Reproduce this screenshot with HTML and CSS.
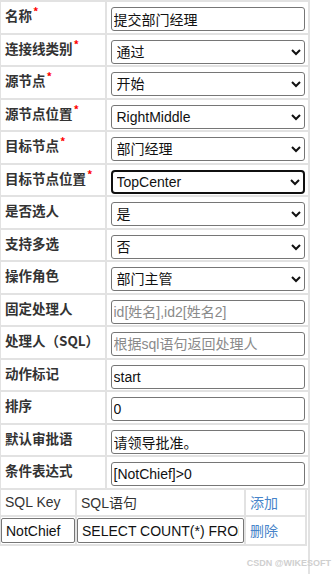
FILE: index.html
```html
<!DOCTYPE html>
<html lang="zh-CN">
<head>
    <meta charset="UTF-8">
    <meta name="viewport" content="width=device-width, initial-scale=1.0">
    <title>连线属性</title>
    <link rel="stylesheet" href="styles.css">
</head>
<body>
    <main class="panel">
        <table class="form">
            <tr>
                <td class="lbl">名称<span class="req">*</span></td>
                <td class="fld"><input class="inp" type="text" value="提交部门经理"></td>
            </tr>
            <tr>
                <td class="lbl">连接线类别<span class="req">*</span></td>
                <td class="fld"><select class="sel"><option>通过</option><option>退回</option></select></td>
            </tr>
            <tr>
                <td class="lbl">源节点<span class="req">*</span></td>
                <td class="fld"><select class="sel"><option>开始</option></select></td>
            </tr>
            <tr>
                <td class="lbl">源节点位置<span class="req">*</span></td>
                <td class="fld"><select class="sel"><option>RightMiddle</option></select></td>
            </tr>
            <tr>
                <td class="lbl">目标节点<span class="req">*</span></td>
                <td class="fld"><select class="sel"><option>部门经理</option></select></td>
            </tr>
            <tr>
                <td class="lbl">目标节点位置<span class="req">*</span></td>
                <td class="fld"><select class="sel sel-focus"><option>TopCenter</option></select></td>
            </tr>
            <tr>
                <td class="lbl">是否选人</td>
                <td class="fld"><select class="sel"><option>是</option><option>否</option></select></td>
            </tr>
            <tr>
                <td class="lbl">支持多选</td>
                <td class="fld"><select class="sel"><option>否</option><option>是</option></select></td>
            </tr>
            <tr>
                <td class="lbl">操作角色</td>
                <td class="fld"><select class="sel"><option>部门主管</option></select></td>
            </tr>
            <tr>
                <td class="lbl">固定处理人</td>
                <td class="fld"><input class="inp" type="text" placeholder="id[姓名],id2[姓名2]"></td>
            </tr>
            <tr>
                <td class="lbl">处理人（SQL）</td>
                <td class="fld"><input class="inp" type="text" placeholder="根据sql语句返回处理人"></td>
            </tr>
            <tr>
                <td class="lbl">动作标记</td>
                <td class="fld"><input class="inp" type="text" value="start"></td>
            </tr>
            <tr>
                <td class="lbl">排序</td>
                <td class="fld"><input class="inp" type="text" value="0"></td>
            </tr>
            <tr>
                <td class="lbl">默认审批语</td>
                <td class="fld"><input class="inp" type="text" value="请领导批准。"></td>
            </tr>
            <tr>
                <td class="lbl">条件表达式</td>
                <td class="fld"><input class="inp" type="text" value="[NotChief]>0"></td>
            </tr>
        </table>

        <table class="sql">
            <tr class="sql-head">
                <td class="c-key">SQL Key</td>
                <td class="c-stmt">SQL语句</td>
                <td class="c-op"><a href="#" class="op-link">添加</a></td>
            </tr>
            <tr class="sql-row">
                <td class="c-key"><input class="cell-inp" type="text" value="NotChief"></td>
                <td class="c-stmt"><input class="cell-inp" type="text" value="SELECT COUNT(*) FROM Users WHERE IsChief=1"></td>
                <td class="c-op"><a href="#" class="op-link">删除</a></td>
            </tr>
        </table>
    </main>
    <div class="watermark">CSDN @WIKESOFT</div>
</body>
</html>
```

FILE: styles.css
```css
:root {
    --line-color: #e2e2e2;
    --field-border: #767676;
    --label-color: #333333;
    --link-color: #4683c9;
}

body {
    margin: 0;
    background: #ffffff;
    font-family: "Liberation Sans", "Noto Sans CJK SC", sans-serif;
    color: var(--label-color);
}

.panel {
    width: 308px;
    min-height: 574px;
    border-right: 2px solid var(--line-color);
}

/* main form */
.form {
    width: 100%;
    border-collapse: separate;
    border-spacing: 0;
    table-layout: fixed;
    border-top: 2px solid var(--line-color);
    border-left: 1px solid var(--line-color);
}

.form td {
    border-bottom: 2px solid var(--line-color);
}

.lbl {
    width: 100px;
    padding: 4px 0 0 4px;
    border-right: 2px solid var(--line-color);
    vertical-align: top;
    font-family: "Noto Sans CJK SC", sans-serif;
    font-size: 13.5px;
    line-height: 18px;
    font-weight: 700;
    white-space: nowrap;
}

.req {
    color: #ff0000;
    font-size: 11px;
    line-height: 11px;
    vertical-align: top;
    margin-left: 1px;
}

.fld {
    padding: 5px 3px 1.5px 3.5px;
}

.inp,
.sel {
    display: block;
    width: 100%;
    height: 24px;
    box-sizing: border-box;
    margin: 0;
    border: 1px solid var(--field-border);
    border-radius: 3px;
    background: #ffffff;
    font-family: "Liberation Sans", "Noto Sans CJK SC", sans-serif;
    font-size: 14px;
    color: #111111;
}

.inp {
    padding: 0 2px;
}

.inp::placeholder {
    color: #8a8a8a;
}

.sel {
    padding: 0 0 0 1px;
}

.sel-focus {
    border: 2px solid #101010;
    border-radius: 4px;
    padding-left: 0;
}

/* sql list */
.sql {
    width: 307px;
    border-collapse: separate;
    border-spacing: 0;
    table-layout: fixed;
    border-left: 1px solid var(--line-color);
    border-right: 2px solid var(--line-color);
    font-size: 14px;
}

.sql td {
    border-bottom: 2px solid var(--line-color);
    padding: 0 0 0 4px;
    white-space: nowrap;
    overflow: hidden;
}

.sql .c-key {
    width: 70px;
    border-right: 2px solid var(--line-color);
}

.sql .c-stmt {
    width: 163px;
    border-right: 2px solid var(--line-color);
}

.sql-head td {
    height: 25px;
}

.sql-row td {
    height: 26px;
}

.sql-row .c-key,
.sql-row .c-stmt {
    padding: 1px 0 0 0;
}

.cell-inp {
    display: block;
    width: 100%;
    height: 25px;
    box-sizing: border-box;
    margin: 0;
    padding: 0 4px;
    border: 1px solid var(--field-border);
    border-radius: 2px;
    font-family: "Liberation Sans", "Noto Sans CJK SC", sans-serif;
    font-size: 14px;
    color: #111111;
}

.op-link {
    color: var(--link-color);
    text-decoration: none;
}

.watermark {
    position: absolute;
    right: 5px;
    bottom: 6px;
    font-family: "Liberation Sans", sans-serif;
    font-size: 9px;
    font-weight: 700;
    color: #cfcfcf;
}
```
